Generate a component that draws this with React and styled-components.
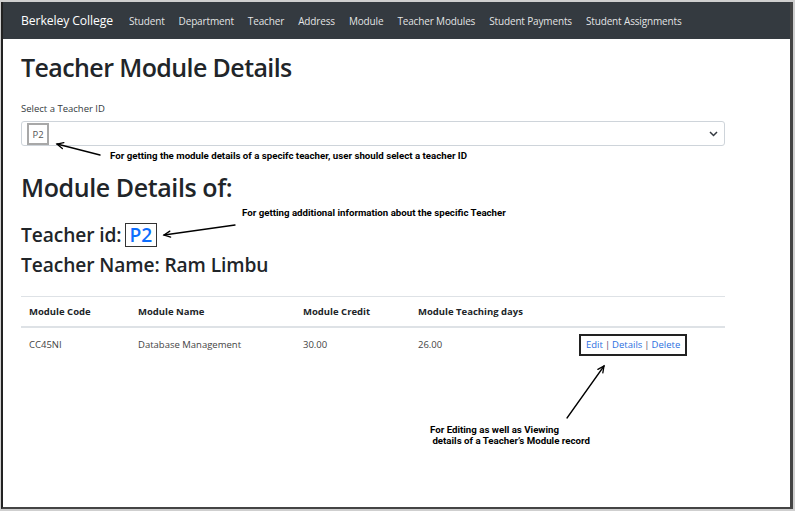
import React from "react";
import styled, { createGlobalStyle } from "styled-components";

const Global = createGlobalStyle`
  html, body { margin: 0; padding: 0; background: #cfcfcf; }
  body { font-family: "Open Sans", "Noto Sans", sans-serif; color: #212529; }
`;

const Frame = styled.div`
  position: relative;
  box-sizing: border-box;
  margin: 2px 2px 0 1px;
  height: 507px;
  background: #fff;
  border-left: 2px solid #222;
  border-right: 3px solid #444;
  border-bottom: 2px solid #444;
  overflow: hidden;
`;

const Navbar = styled.nav`
  height: 37px;
  background: #343a40;
  display: flex;
  align-items: center;
  padding-left: 18px;
`;

const Brand = styled.span`
  font-size: 12.2px;
  color: #fff;
  margin-right: 9px;
  letter-spacing: -0.1px;
`;

const NavLink = styled.span`
  font-size: 10px;
  color: rgba(255, 255, 255, 0.88);
  padding: 0 7px;
  letter-spacing: -0.15px;
`;

const Main = styled.main`
  padding-left: 18px;
  width: 704px;
`;

const Title = styled.h1`
  margin: 11px 0 0;
  font-size: 25px;
  line-height: 35px;
  font-weight: 600;
  letter-spacing: -0.6px;
`;

const Label = styled.div`
  margin-top: 17px;
  font-size: 9.5px;
  line-height: 14px;
  color: #343a40;
`;

const FakeSelect = styled.div`
  box-sizing: border-box;
  margin-top: 5px;
  height: 25px;
  border: 1px solid #ced4da;
  border-radius: 3px;
  display: flex;
  align-items: center;
  justify-content: space-between;
  padding: 0 6px 0 5px;
`;

const Chosen = styled.span`
  box-sizing: border-box;
  border: 2px solid #a8a8a8;
  height: 22px;
  width: 22px;
  margin-top: 1px;
  display: flex;
  align-items: center;
  justify-content: center;
  font-size: 9.5px;
  color: #555;
`;

const SubTitle = styled.h2`
  margin: 26px 0 0;
  font-size: 25px;
  line-height: 30px;
  font-weight: 600;
  letter-spacing: -0.4px;
`;

const InfoLine = styled.h4`
  margin: ${(p) => p.$gap}px 0 0;
  font-size: 19.2px;
  line-height: 24px;
  font-weight: 600;
  letter-spacing: -0.1px;
  display: flex;
  align-items: center;
`;

const IdBox = styled.span`
  box-sizing: border-box;
  margin-left: 3px;
  border: 1.5px solid #333;
  height: 24px;
  padding: 0 4px;
  color: #0d6efd;
  display: inline-flex;
  align-items: center;
`;

const Table = styled.table`
  margin-top: 19px;
  width: 704px;
  border-collapse: collapse;
  table-layout: fixed;
  font-size: 9.5px;
`;

const Th = styled.th`
  text-align: left;
  font-weight: 700;
  padding: 0 8px;
  height: 29px;
  border-top: 1px solid #dee2e6;
  border-bottom: 2px solid #dee2e6;
  color: #212529;
`;

const Td = styled.td`
  padding: 0 8px;
  height: 32px;
  color: #444;
`;

const Actions = styled.span`
  box-sizing: border-box;
  display: inline-flex;
  align-items: center;
  height: 22px;
  padding: 0 5px;
  border: 2px solid #222;
  margin-top: 1px;
`;

const ActionLink = styled.a`
  color: #2b6fe0;
  text-decoration: none;
`;

const Sep = styled.span`
  color: #5a4a6a;
  padding: 0 2px;
`;

const Note = styled.div`
  position: absolute;
  font-family: Roboto, "Liberation Sans", sans-serif;
  font-weight: 700;
  font-size: 9.7px;
  line-height: ${(p) => p.$lh || 12}px;
  color: #000;
  white-space: pre;
`;

const ArrowLayer = styled.svg`
  position: absolute;
  left: 0;
  top: 0;
  pointer-events: none;
`;

function Arrow({ x1, y1, x2, y2 }) {
  const a = Math.atan2(y2 - y1, x2 - x1);
  const L = 7;
  const s = 0.45;
  const p1 = [x2 - L * Math.cos(a - s), y2 - L * Math.sin(a - s)];
  const p2 = [x2 - L * Math.cos(a + s), y2 - L * Math.sin(a + s)];
  return (
    <g stroke="#000" strokeWidth="1.3" fill="none" strokeLinecap="round">
      <line x1={x1} y1={y1} x2={x2} y2={y2} />
      <polyline points={`${p1[0]},${p1[1]} ${x2},${y2} ${p2[0]},${p2[1]}`} />
    </g>
  );
}

const links = [
  "Student",
  "Department",
  "Teacher",
  "Address",
  "Module",
  "Teacher Modules",
  "Student Payments",
  "Student Assignments",
];

export default function App() {
  return (
    <>
      <Global />
      <Frame>
        <Navbar>
          <Brand>Berkeley College</Brand>
          {links.map((l) => (
            <NavLink key={l}>{l}</NavLink>
          ))}
        </Navbar>
        <Main>
          <Title>Teacher Module Details</Title>
          <Label>Select a Teacher ID</Label>
          <FakeSelect>
            <Chosen>P2</Chosen>
            <svg width="9" height="6" viewBox="0 0 9 6">
              <path d="M1 1l3.5 3.5L8 1" stroke="#343a40" strokeWidth="1.5" fill="none" />
            </svg>
          </FakeSelect>
          <SubTitle>Module Details of:</SubTitle>
          <InfoLine $gap={21}>
            Teacher id:<IdBox>P2</IdBox>
          </InfoLine>
          <InfoLine $gap={6}>Teacher Name: Ram Limbu</InfoLine>
          <Table>
            <colgroup>
              <col style={{ width: 109 }} />
              <col style={{ width: 165 }} />
              <col style={{ width: 115 }} />
              <col style={{ width: 161 }} />
              <col style={{ width: 154 }} />
            </colgroup>
            <thead>
              <tr>
                <Th>Module Code</Th>
                <Th>Module Name</Th>
                <Th>Module Credit</Th>
                <Th>Module Teaching days</Th>
                <Th />
              </tr>
            </thead>
            <tbody>
              <tr>
                <Td>CC45NI</Td>
                <Td>Database Management</Td>
                <Td>30.00</Td>
                <Td>26.00</Td>
                <Td>
                  <Actions>
                    <ActionLink href="#">Edit</ActionLink>
                    <Sep>|</Sep>
                    <ActionLink href="#">Details</ActionLink>
                    <Sep>|</Sep>
                    <ActionLink href="#">Delete</ActionLink>
                  </Actions>
                </Td>
              </tr>
            </tbody>
          </Table>
        </Main>

        <ArrowLayer width="789" height="505">
          <Arrow x1={97} y1={153} x2={54} y2={142} />
          <Arrow x1={232} y1={223} x2={161} y2={233} />
          <Arrow x1={564} y1={416} x2={601} y2={364} />
        </ArrowLayer>
        <Note style={{ left: 107, top: 148 }}>
          For getting the module details of a specifc teacher, user should select a teacher ID
        </Note>
        <Note style={{ left: 239, top: 205 }}>
          For getting additional information about the specific Teacher
        </Note>
        <Note $lh={11} style={{ left: 427, top: 422 }}>
          {"For Editing as well as Viewing\n details of a Teacher\u2019s Module record"}
        </Note>
      </Frame>
    </>
  );
}
